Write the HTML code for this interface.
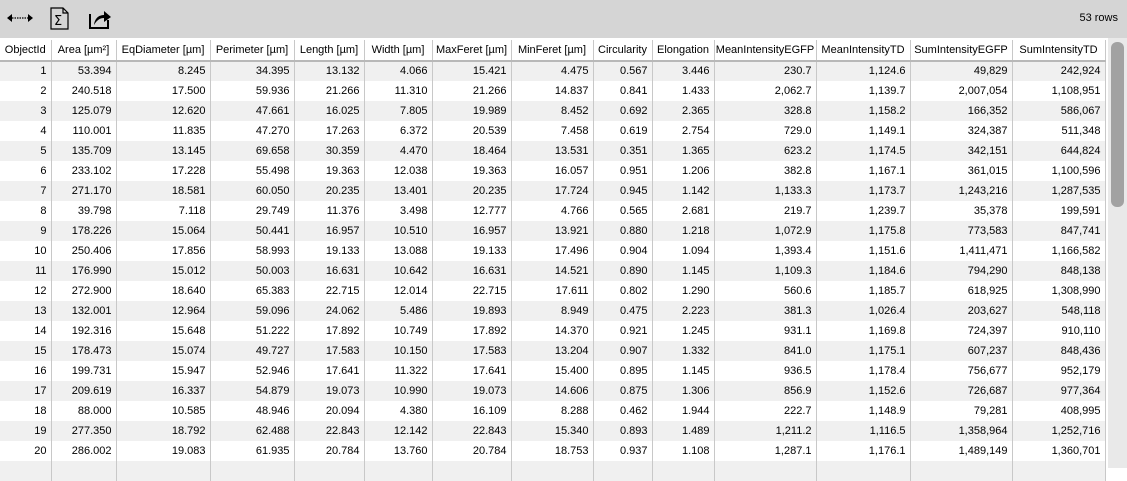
<!DOCTYPE html>
<html><head><style>
body{margin:0;width:1127px;height:468px;overflow:hidden;background:#fff;font-family:"Liberation Sans",Arial,sans-serif;font-size:11px;color:#000;position:relative}
.tb{position:absolute;left:0;top:0;width:1127px;height:38px;background:#d5d5d5}
.rows{position:absolute;right:9px;top:12px;font-size:11px}
table{position:absolute;left:0;top:40px;width:1105px;border-collapse:collapse;table-layout:fixed}
td,th{height:20px;padding:0 4px 0 2px;border-right:1px solid #c8c8c8;text-align:right;white-space:nowrap;overflow:hidden;box-sizing:border-box;font-size:11px;line-height:19px}
th{font-weight:normal;text-align:center;border-bottom:2px solid #b8b8b8;height:21px;padding:0 1px}
tr:nth-child(even) td{background:#f0f0f0}
.track{position:absolute;left:1108px;top:38px;width:19px;height:430px;background:#e9e9e9}
.thumb{position:absolute;left:1111px;top:42px;width:13px;height:165px;background:#a2a2a2;border-radius:6px}
</style></head><body>
<div class="tb">
<svg style="position:absolute;left:6px;top:10px" width="28" height="16"><path d="M1 8 L6 4 L6 12Z M27 8 L22 4 L22 12Z" fill="#000"/><path d="M6 8 H22" stroke="#000" stroke-width="1.2" stroke-dasharray="1.5 1"/></svg>
<svg style="position:absolute;left:50px;top:7px" width="20" height="24"><path d="M1 1 H13 L18 6 V22 H1Z M13 1 V6 H18" fill="none" stroke="#000" stroke-width="1.2"/><text x="4" y="18" font-size="13" font-family="DejaVu Sans">Σ</text></svg>
<svg style="position:absolute;left:88px;top:8px" width="24" height="22"><path d="M2 6 V20 H20 V12" fill="none" stroke="#000" stroke-width="2"/><path d="M6 17 C7 9 12 7 16 7 V3 L23 9 L16 14 V10 C12 10 9 12 6 17Z" fill="#000"/></svg>
<div class="rows">53 rows</div>
</div>
<table>
<colgroup><col style="width:51px"><col style="width:65px"><col style="width:94px"><col style="width:84px"><col style="width:70px"><col style="width:68px"><col style="width:79px"><col style="width:82px"><col style="width:59px"><col style="width:62px"><col style="width:102px"><col style="width:94px"><col style="width:102px"><col style="width:93px"></colgroup>
<tr><th>ObjectId</th><th>Area [µm²]</th><th>EqDiameter [µm]</th><th>Perimeter [µm]</th><th>Length [µm]</th><th>Width [µm]</th><th>MaxFeret [µm]</th><th>MinFeret [µm]</th><th>Circularity</th><th>Elongation</th><th>MeanIntensityEGFP</th><th>MeanIntensityTD</th><th>SumIntensityEGFP</th><th>SumIntensityTD</th></tr>
<tr><td>1</td><td>53.394</td><td>8.245</td><td>34.395</td><td>13.132</td><td>4.066</td><td>15.421</td><td>4.475</td><td>0.567</td><td>3.446</td><td>230.7</td><td>1,124.6</td><td>49,829</td><td>242,924</td></tr>
<tr><td>2</td><td>240.518</td><td>17.500</td><td>59.936</td><td>21.266</td><td>11.310</td><td>21.266</td><td>14.837</td><td>0.841</td><td>1.433</td><td>2,062.7</td><td>1,139.7</td><td>2,007,054</td><td>1,108,951</td></tr>
<tr><td>3</td><td>125.079</td><td>12.620</td><td>47.661</td><td>16.025</td><td>7.805</td><td>19.989</td><td>8.452</td><td>0.692</td><td>2.365</td><td>328.8</td><td>1,158.2</td><td>166,352</td><td>586,067</td></tr>
<tr><td>4</td><td>110.001</td><td>11.835</td><td>47.270</td><td>17.263</td><td>6.372</td><td>20.539</td><td>7.458</td><td>0.619</td><td>2.754</td><td>729.0</td><td>1,149.1</td><td>324,387</td><td>511,348</td></tr>
<tr><td>5</td><td>135.709</td><td>13.145</td><td>69.658</td><td>30.359</td><td>4.470</td><td>18.464</td><td>13.531</td><td>0.351</td><td>1.365</td><td>623.2</td><td>1,174.5</td><td>342,151</td><td>644,824</td></tr>
<tr><td>6</td><td>233.102</td><td>17.228</td><td>55.498</td><td>19.363</td><td>12.038</td><td>19.363</td><td>16.057</td><td>0.951</td><td>1.206</td><td>382.8</td><td>1,167.1</td><td>361,015</td><td>1,100,596</td></tr>
<tr><td>7</td><td>271.170</td><td>18.581</td><td>60.050</td><td>20.235</td><td>13.401</td><td>20.235</td><td>17.724</td><td>0.945</td><td>1.142</td><td>1,133.3</td><td>1,173.7</td><td>1,243,216</td><td>1,287,535</td></tr>
<tr><td>8</td><td>39.798</td><td>7.118</td><td>29.749</td><td>11.376</td><td>3.498</td><td>12.777</td><td>4.766</td><td>0.565</td><td>2.681</td><td>219.7</td><td>1,239.7</td><td>35,378</td><td>199,591</td></tr>
<tr><td>9</td><td>178.226</td><td>15.064</td><td>50.441</td><td>16.957</td><td>10.510</td><td>16.957</td><td>13.921</td><td>0.880</td><td>1.218</td><td>1,072.9</td><td>1,175.8</td><td>773,583</td><td>847,741</td></tr>
<tr><td>10</td><td>250.406</td><td>17.856</td><td>58.993</td><td>19.133</td><td>13.088</td><td>19.133</td><td>17.496</td><td>0.904</td><td>1.094</td><td>1,393.4</td><td>1,151.6</td><td>1,411,471</td><td>1,166,582</td></tr>
<tr><td>11</td><td>176.990</td><td>15.012</td><td>50.003</td><td>16.631</td><td>10.642</td><td>16.631</td><td>14.521</td><td>0.890</td><td>1.145</td><td>1,109.3</td><td>1,184.6</td><td>794,290</td><td>848,138</td></tr>
<tr><td>12</td><td>272.900</td><td>18.640</td><td>65.383</td><td>22.715</td><td>12.014</td><td>22.715</td><td>17.611</td><td>0.802</td><td>1.290</td><td>560.6</td><td>1,185.7</td><td>618,925</td><td>1,308,990</td></tr>
<tr><td>13</td><td>132.001</td><td>12.964</td><td>59.096</td><td>24.062</td><td>5.486</td><td>19.893</td><td>8.949</td><td>0.475</td><td>2.223</td><td>381.3</td><td>1,026.4</td><td>203,627</td><td>548,118</td></tr>
<tr><td>14</td><td>192.316</td><td>15.648</td><td>51.222</td><td>17.892</td><td>10.749</td><td>17.892</td><td>14.370</td><td>0.921</td><td>1.245</td><td>931.1</td><td>1,169.8</td><td>724,397</td><td>910,110</td></tr>
<tr><td>15</td><td>178.473</td><td>15.074</td><td>49.727</td><td>17.583</td><td>10.150</td><td>17.583</td><td>13.204</td><td>0.907</td><td>1.332</td><td>841.0</td><td>1,175.1</td><td>607,237</td><td>848,436</td></tr>
<tr><td>16</td><td>199.731</td><td>15.947</td><td>52.946</td><td>17.641</td><td>11.322</td><td>17.641</td><td>15.400</td><td>0.895</td><td>1.145</td><td>936.5</td><td>1,178.4</td><td>756,677</td><td>952,179</td></tr>
<tr><td>17</td><td>209.619</td><td>16.337</td><td>54.879</td><td>19.073</td><td>10.990</td><td>19.073</td><td>14.606</td><td>0.875</td><td>1.306</td><td>856.9</td><td>1,152.6</td><td>726,687</td><td>977,364</td></tr>
<tr><td>18</td><td>88.000</td><td>10.585</td><td>48.946</td><td>20.094</td><td>4.380</td><td>16.109</td><td>8.288</td><td>0.462</td><td>1.944</td><td>222.7</td><td>1,148.9</td><td>79,281</td><td>408,995</td></tr>
<tr><td>19</td><td>277.350</td><td>18.792</td><td>62.488</td><td>22.843</td><td>12.142</td><td>22.843</td><td>15.340</td><td>0.893</td><td>1.489</td><td>1,211.2</td><td>1,116.5</td><td>1,358,964</td><td>1,252,716</td></tr>
<tr><td>20</td><td>286.002</td><td>19.083</td><td>61.935</td><td>20.784</td><td>13.760</td><td>20.784</td><td>18.753</td><td>0.937</td><td>1.108</td><td>1,287.1</td><td>1,176.1</td><td>1,489,149</td><td>1,360,701</td></tr>
<tr><td></td><td></td><td></td><td></td><td></td><td></td><td></td><td></td><td></td><td></td><td></td><td></td><td></td><td></td></tr>
</table>
<div class="track"></div><div class="thumb"></div>
</body></html>
